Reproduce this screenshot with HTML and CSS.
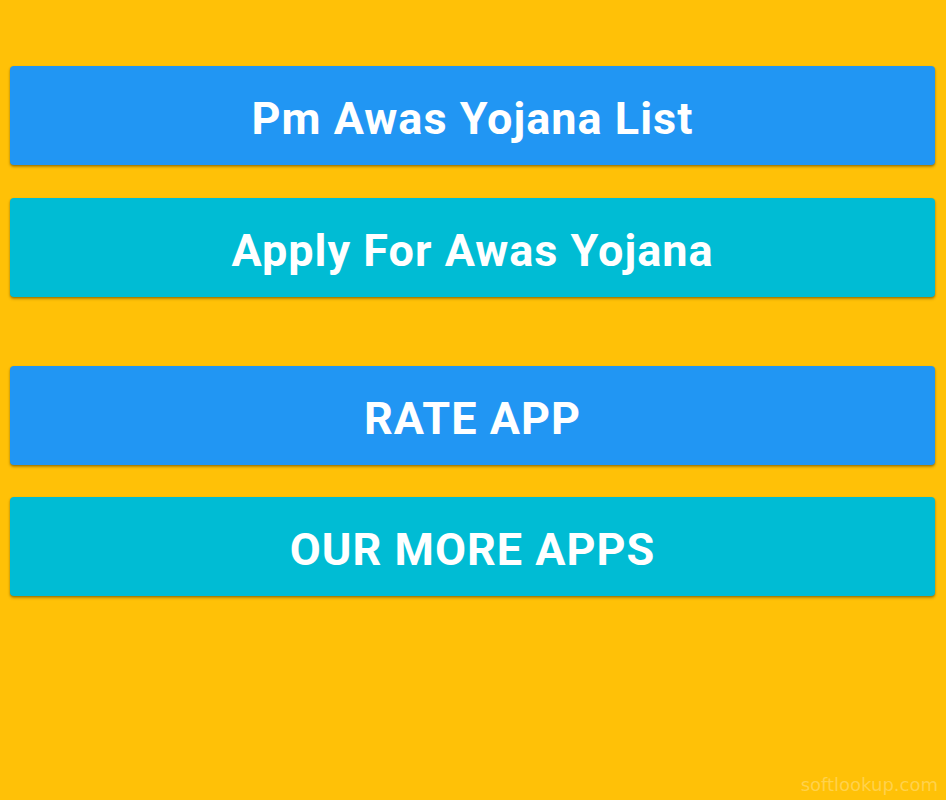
FILE: index.html
```html
<!DOCTYPE html>
<html>
<head>
<meta charset="utf-8">
<link rel="stylesheet" href="styles.css">
</head>
<body>
<main class="screen">
  <div class="group">
    <button class="btn blue">Pm Awas Yojana List</button>
    <button class="btn cyan">Apply For Awas Yojana</button>
  </div>
  <div class="group second">
    <button class="btn blue">RATE APP</button>
    <button class="btn cyan">OUR MORE APPS</button>
  </div>
  <div class="watermark">softlookup.com</div>
</main>
</body>
</html>
```

FILE: styles.css
```css
html, body {
  margin: 0;
  padding: 0;
  background: #FFC107;
}
.screen {
  position: relative;
  width: 946px;
  height: 800px;
  box-sizing: border-box;
  padding: 66px 11px 0 10px;
  background: #FFC107;
  font-family: Roboto, "Liberation Sans", sans-serif;
}
.group {
  display: flex;
  flex-direction: column;
  gap: 33px;
}
.group.second {
  margin-top: 69px;
  gap: 32px;
}
.btn {
  display: block;
  width: 100%;
  height: 99px;
  border: none;
  border-radius: 4px;
  color: #fff;
  font-family: Roboto, "Liberation Sans", sans-serif;
  font-weight: 700;
  font-size: 45px;
  letter-spacing: 1px;
  box-shadow: 0 2px 3px rgba(0,0,0,0.25), 0 1px 2px rgba(0,0,0,0.2);
  padding: 6px 0 0 0;
}
.blue { background: #2196F3; }
.cyan { background: #00BCD4; }
.watermark {
  position: absolute;
  right: 8px;
  bottom: 5px;
  font-family: "DejaVu Sans", sans-serif;
  font-size: 18px;
  color: rgba(255,255,255,0.28);
}
```
